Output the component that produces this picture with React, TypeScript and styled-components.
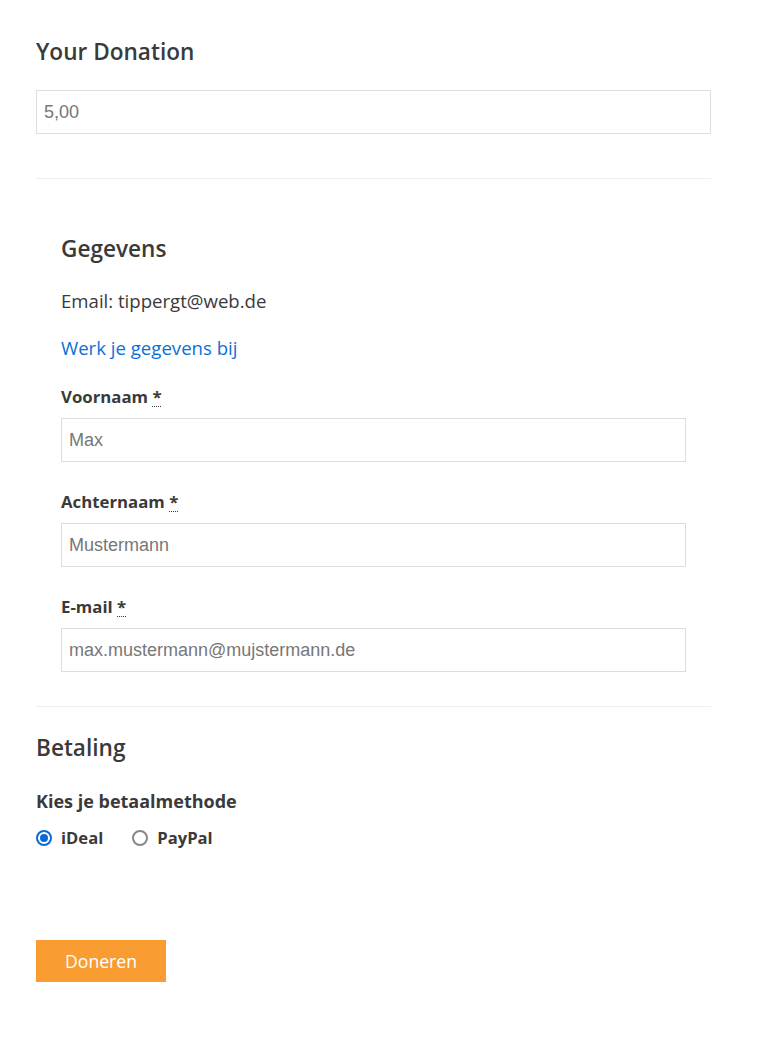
import styled, { createGlobalStyle } from 'styled-components'

const GlobalStyle = createGlobalStyle`
  body {
    margin: 0;
    background: #fff;
    font-family: 'Open Sans', 'Liberation Sans', sans-serif;
    color: #3a3a3a;
  }
  * { box-sizing: border-box; }
`

const Page = styled.form`
  width: 675px;
  margin-left: 36px;
  padding-top: 38px;
  padding-bottom: 60px;
`

const Heading = styled.h2`
  margin: 0;
  font-size: 22.6px;
  line-height: 28px;
  font-weight: 600;
  color: #3a3a3a;
`

const TextInput = styled.input`
  display: block;
  width: 100%;
  height: 44px;
  border: 1px solid #ddd;
  padding: 0 7px;
  font-family: 'Liberation Sans', Arial, sans-serif;
  font-size: 18px;
  color: #777;
  background: #fff;
  outline: none;
  &::placeholder { color: #777; }
`

const AmountInput = styled(TextInput)`
  margin-top: 24px;
`

const Divider = styled.hr<{ $top: number; $bottom: number }>`
  border: 0;
  border-top: 1px solid #eee;
  margin: ${p => p.$top}px 0 ${p => p.$bottom}px;
`

const Section = styled.fieldset`
  border: 0;
  margin: 0;
  padding: 0 25px;
`

const Paragraph = styled.p`
  margin: 25px 0 0;
  font-size: 18.6px;
  line-height: 26px;
  color: #3a3a3a;
`

const Link = styled.a`
  display: block;
  margin-top: 21px;
  font-size: 18.6px;
  line-height: 26px;
  color: #0b6fd8;
  text-decoration: none;
`

const Field = styled.div`
  margin-top: 28px;
  &:first-of-type { margin-top: 24px; }
`

const Label = styled.label`
  display: block;
  margin-bottom: 10px;
  font-size: 16.8px;
  line-height: 23px;
  font-weight: 700;
  color: #3a3a3a;
`

const Required = styled.abbr`
  text-decoration: underline dotted;
  text-underline-offset: 3px;
  text-decoration-thickness: 1px;
  cursor: help;
`

const SubHeading = styled.div`
  margin-top: 27px;
  font-size: 18px;
  line-height: 24px;
  font-weight: 700;
  color: #3a3a3a;
`

const RadioRow = styled.div`
  display: flex;
  gap: 29px;
  margin-top: 13px;
`

const RadioOption = styled.label`
  display: flex;
  align-items: center;
  gap: 9px;
  font-size: 16.6px;
  line-height: 24px;
  font-weight: 700;
  color: #3a3a3a;
`

const RadioDot = styled.span<{ $checked?: boolean }>`
  width: 16px;
  height: 16px;
  border-radius: 50%;
  border: 2px solid ${p => (p.$checked ? '#0b6ad6' : '#888')};
  display: flex;
  align-items: center;
  justify-content: center;
  &::after {
    content: '';
    width: 8px;
    height: 8px;
    border-radius: 50%;
    background: ${p => (p.$checked ? '#0b6ad6' : 'transparent')};
  }
`

const SubmitButton = styled.button`
  display: block;
  margin-top: 90px;
  width: 130px;
  height: 42px;
  border: 0;
  background: #f99d33;
  color: #fff;
  font-family: 'Open Sans', sans-serif;
  font-size: 17.6px;
  font-weight: 500;
  cursor: pointer;
`

const fields = [
  { label: 'Voornaam', placeholder: 'Max' },
  { label: 'Achternaam', placeholder: 'Mustermann' },
  { label: 'E-mail', placeholder: 'max.mustermann@mujstermann.de' },
]

const App = () => {
  return (
    <>
      <GlobalStyle />
      <Page onSubmit={e => e.preventDefault()}>
        <Heading>Your Donation</Heading>
        <AmountInput defaultValue='5,00' />
        <Divider $top={44} $bottom={56} />
        <Section>
          <Heading>Gegevens</Heading>
          <Paragraph>Email: tippergt@web.de</Paragraph>
          <Link href='#'>Werk je gegevens bij</Link>
          {fields.map(f => (
            <Field key={f.label}>
              <Label>
                {f.label} <Required title='required'>*</Required>
              </Label>
              <TextInput placeholder={f.placeholder} />
            </Field>
          ))}
        </Section>
        <Divider $top={34} $bottom={27} />
        <Heading>Betaling</Heading>
        <SubHeading>Kies je betaalmethode</SubHeading>
        <RadioRow>
          <RadioOption>
            <RadioDot $checked />
            iDeal
          </RadioOption>
          <RadioOption>
            <RadioDot />
            PayPal
          </RadioOption>
        </RadioRow>
        <SubmitButton type='submit'>Doneren</SubmitButton>
      </Page>
    </>
  )
}

export default App
